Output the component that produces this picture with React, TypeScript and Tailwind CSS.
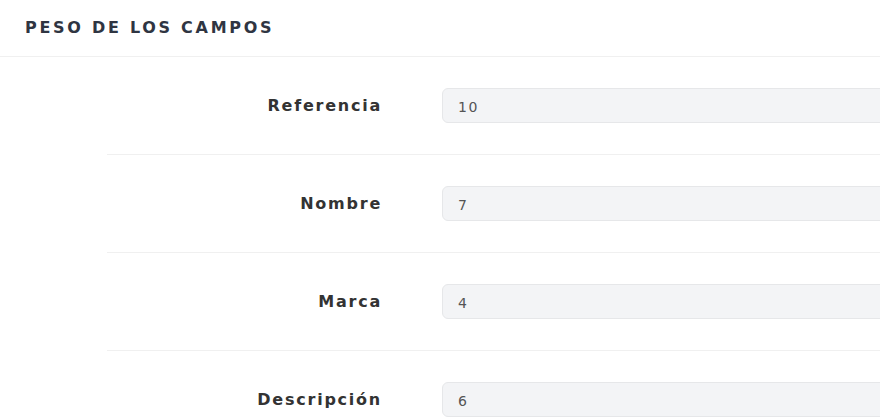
import React from "react";

const rows = [
  { label: "Referencia", value: "10" },
  { label: "Nombre", value: "7" },
  { label: "Marca", value: "4" },
  { label: "Descripción", value: "6" },
];

export default function App() {
  return (
    <div
      className="w-[880px] h-[420px] overflow-hidden bg-white"
      style={{ fontFamily: '"DejaVu Sans", "Noto Sans", sans-serif' }}
    >
      <div className="h-[57px] border-b border-[#f0f0f0] flex items-center pl-[25px]">
        <span className="text-[16px] font-semibold text-[#2f3542] tracking-[0.17em]">PESO DE LOS CAMPOS</span>
      </div>
      <div className="pl-[107px]">
        {rows.map((r) => (
          <div key={r.label} className="flex items-center border-b border-[#f0f0f0] pt-[31px] pb-[31px]">
            <div className="w-[275px] shrink-0 text-right text-[16px] font-bold text-[#333] tracking-[0.11em]">
              {r.label}
            </div>
            <div className="ml-[60px] w-[520px] shrink-0 h-[35px] rounded-[6px] border border-[#e6e7e9] bg-[#f3f4f6] flex items-center pl-[15px] pt-[3px] text-[14px] tracking-[0.12em] text-[#555]">
              {r.value}
            </div>
          </div>
        ))}
      </div>
    </div>
  );
}
